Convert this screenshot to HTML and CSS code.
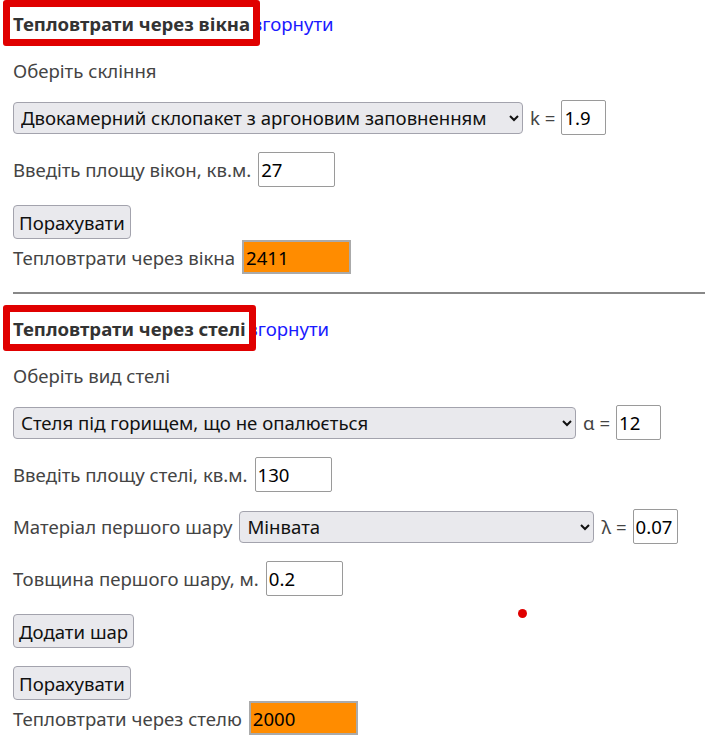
FILE: index.html
```html
<!DOCTYPE html>
<html lang="uk">
<head>
  <meta charset="UTF-8">
  <meta name="viewport" content="width=device-width, initial-scale=1.0">
  <title>Тепловтрати</title>
  <link rel="stylesheet" href="styles.css">
</head>
<body>
  <!-- Windows -->
  <section class="calc">
    <div class="title-row">
      <span class="title marked">Тепловтрати через вікна</span><a href="#" class="toggle">згорнути</a>
    </div>
    <p class="label">Оберіть скління</p>
    <div class="row">
      <select class="select select-glass">
        <option>Двокамерний склопакет з аргоновим заповненням</option>
      </select>
      <span class="coef">k =</span>
      <input type="text" class="input input-small" value="1.9">
    </div>
    <div class="row">
      <span class="label">Введіть площу вікон, кв.м.</span>
      <input type="text" class="input" value="27">
    </div>
    <button class="button">Порахувати</button>
    <div class="row result">
      <span class="label">Тепловтрати через вікна</span>
      <input type="text" class="input output" value="2411">
    </div>
  </section>

  <hr class="divider">

  <!-- Ceiling -->
  <section class="calc">
    <div class="title-row">
      <span class="title marked">Тепловтрати через стелі</span><a href="#" class="toggle">згорнути</a>
    </div>
    <p class="label">Оберіть вид стелі</p>
    <div class="row">
      <select class="select select-ceiling">
        <option>Стеля під горищем, що не опалюється</option>
      </select>
      <span class="coef">α =</span>
      <input type="text" class="input input-small" value="12">
    </div>
    <div class="row">
      <span class="label">Введіть площу стелі, кв.м.</span>
      <input type="text" class="input" value="130">
    </div>
    <div class="row">
      <span class="label">Матеріал першого шару</span>
      <select class="select select-material">
        <option>Мінвата</option>
      </select>
      <span class="coef">λ =</span>
      <input type="text" class="input input-small" value="0.07">
    </div>
    <div class="row">
      <span class="label">Товщина першого шару, м.</span>
      <input type="text" class="input" value="0.2">
    </div>
    <button class="button">Додати шар</button>
    <button class="button">Порахувати</button>
    <div class="row result">
      <span class="label">Тепловтрати через стелю</span>
      <input type="text" class="input output" value="2000">
    </div>
    <span class="dot"></span>
  </section>
</body>
</html>
```

FILE: styles.css
```css
/* Reset & Fonts */
* {
  margin: 0;
  padding: 0;
  box-sizing: border-box;
}

body {
  font-family: 'Noto Sans', 'Open Sans', sans-serif;
  font-size: 18.6px;
  color: #444;
  background-color: #fff;
  padding-left: 13px;
  overflow: hidden;
}

/* Sections */
.calc {
  position: relative;
  display: flex;
  flex-direction: column;
  align-items: flex-start;
}

.title-row {
  height: 30px;
  margin-top: 8px;
  display: flex;
  align-items: center;
  white-space: nowrap;
}

.title {
  font-weight: bold;
  color: #333;
}

/* red highlight frame */
.marked {
  position: relative;
}

.marked::after {
  content: '';
  position: absolute;
  left: -10px;
  right: -10px;
  top: -11px;
  bottom: -10px;
  border: 7px solid #e00000;
  border-radius: 3px;
}

.toggle {
  color: #1a1aff;
  text-decoration: none;
  margin-left: 3px;
}

p.label {
  margin-top: 21px;
  line-height: 24px;
}

.row {
  display: flex;
  align-items: center;
  gap: 7px;
  height: 35px;
  margin-top: 17px;
  white-space: nowrap;
}

/* Controls */
.select {
  font-family: inherit;
  font-size: 18.6px;
  color: #111;
  height: 32px;
  padding: 0 3px;
  background-color: #e9e9ed;
  border: 1px solid #a3a3ad;
  border-radius: 4px;
}

.select-glass {
  width: 510px;
}

.select-ceiling {
  width: 563px;
}

.select-material {
  width: 355px;
}

.coef {
  color: #444;
  margin-right: -1px;
}

.input {
  font-family: inherit;
  font-size: 18.6px;
  color: #000;
  width: 77px;
  height: 35px;
  padding: 0 2px;
  border: 1px solid #9a9a9a;
  border-radius: 2px;
  background: #fff;
}

.input-small {
  width: 45px;
}

.output {
  width: 109px;
  height: 34px;
  background-color: #ff8c00;
  border: 2px solid #aaa;
  border-radius: 0;
}

.button {
  font-family: inherit;
  font-size: 18.6px;
  color: #111;
  height: 34px;
  padding: 0 5px;
  margin-top: 18px;
  background-color: #e9e9ed;
  border: 1px solid #a3a3ad;
  border-radius: 4px;
}

.result {
  margin-top: 1px;
  height: 34px;
}

.divider {
  margin-top: 18px;
  border: none;
  border-top: 2px solid #888;
}

.calc + .divider + .calc .title-row {
  margin-top: 19px;
}

.dot {
  position: absolute;
  left: 505px;
  top: 315px;
  width: 9px;
  height: 9px;
  border-radius: 50%;
  background-color: #e00000;
}
```
